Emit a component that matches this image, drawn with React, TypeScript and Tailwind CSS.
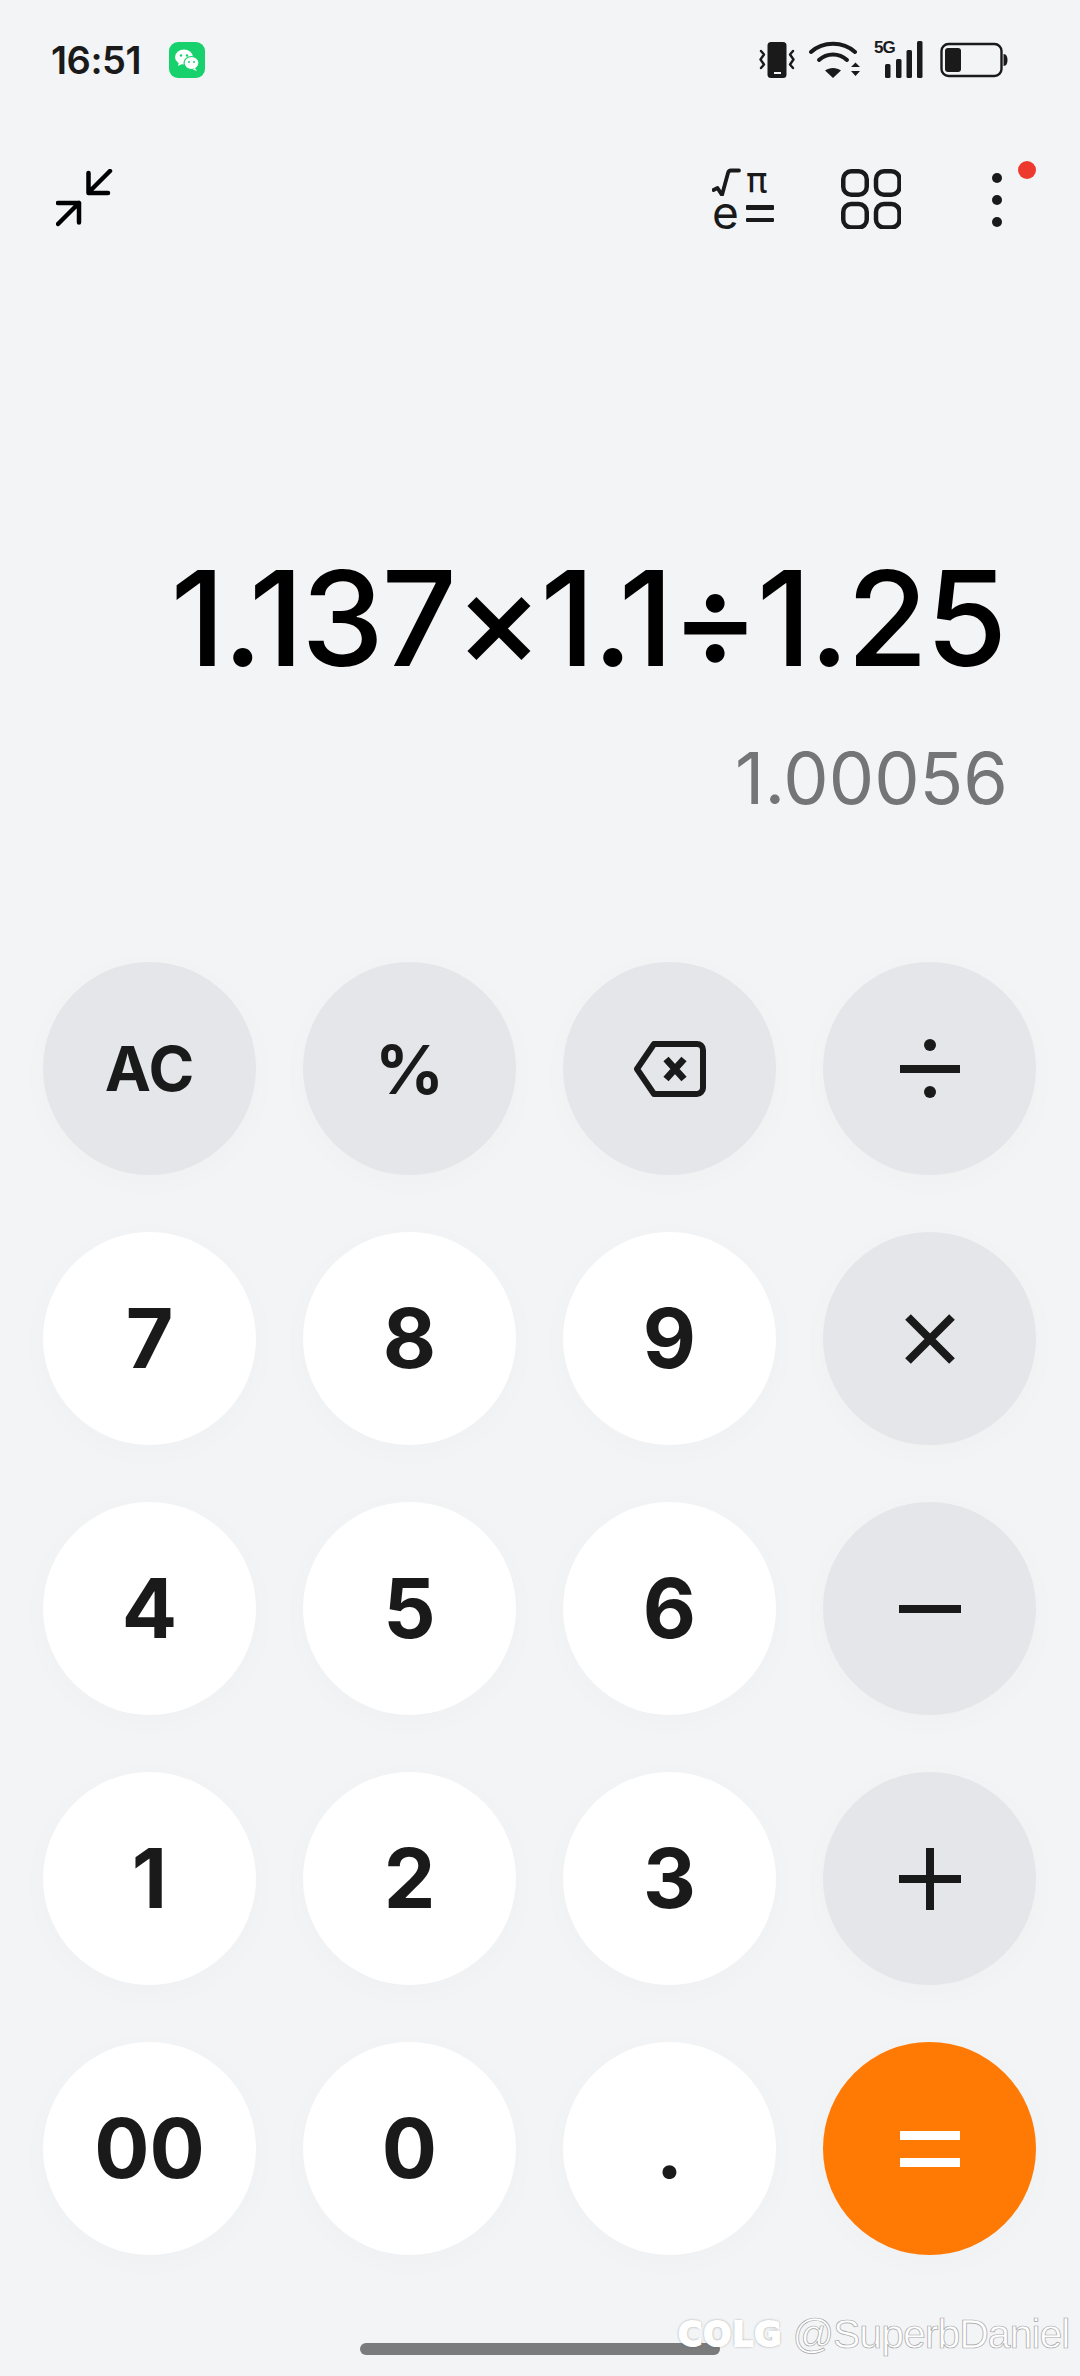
const ink = "#1a1a1b";

function WeChatIcon() {
  return (
    <div className="flex h-[36px] w-[36px] items-center justify-center rounded-[9px] bg-[#16d16c]">
      <svg width="28" height="28" viewBox="0 0 28 28">
        <ellipse cx="11" cy="11" rx="9" ry="7.5" fill="#fff" />
        <path d="M6 16l-1 4 5-2.5z" fill="#fff" />
        <ellipse cx="18.5" cy="17" rx="7.5" ry="6.5" fill="#fff" stroke="#16d16c" strokeWidth="1.2" />
        <path d="M22 22l2 3-4-1.5z" fill="#fff" />
        <circle cx="8" cy="9.5" r="1.2" fill="#16d16c" />
        <circle cx="14" cy="9.5" r="1.2" fill="#16d16c" />
        <circle cx="16" cy="16" r="1" fill="#16d16c" />
        <circle cx="21" cy="16" r="1" fill="#16d16c" />
      </svg>
    </div>
  );
}

function VibrateIcon() {
  return (
    <svg width="38" height="36" viewBox="0 0 38 36">
      <rect x="9.500" y="0" width="19" height="36" rx="3.5" fill={ink} />
      <rect x="16" y="30" width="7" height="2" fill="#f3f4f6" />
      <path d="M3 9l3 3.500-3.500 5 3.500 5-3 3.500M35 9l-3 3.500 3.500 5-3.500 5 3 3.500" fill="none" stroke={ink} strokeWidth="2.400" strokeLinecap="round" strokeLinejoin="round" />
    </svg>
  );
}

function WifiIcon() {
  return (
    <svg width="52" height="38" viewBox="0 0 52 38">
      <path d="M2 11C14 0 34 0 46 11" fill="none" stroke={ink} strokeWidth="4" strokeLinecap="round" />
      <path d="M10 19c8-7.500 20-7.500 28 0" fill="none" stroke={ink} strokeWidth="4" strokeLinecap="round" />
      <path d="M16 29.500c4.500-3.500 11.500-3.500 16 0l-8 7.500z" fill={ink} />
      <path d="M42 26l4.500-4.500 4.500 4.500zM42 30l4.500 5 4.500-5z" fill={ink} />
    </svg>
  );
}

function SignalIcon() {
  return (
    <div className="relative h-[38px] w-[50px]">
      <span className="absolute left-0 top-[-3px] text-[17px] font-bold leading-[20px] tracking-[-1px] text-[#1a1a1b] [font-family:'Liberation_Sans',sans-serif]">
        5G
      </span>
      <svg width="50" height="38" viewBox="0 0 50 38" className="absolute left-0 top-0">
        <rect x="11" y="23" width="5.500" height="14" rx="1.500" fill={ink} />
        <rect x="22" y="18" width="5.500" height="19" rx="1.500" fill={ink} />
        <rect x="32.500" y="9" width="5.500" height="28" rx="1.500" fill={ink} />
        <rect x="43" y="0" width="5.500" height="37" rx="1.500" fill={ink} />
      </svg>
    </div>
  );
}

function BatteryIcon() {
  return (
    <svg width="68" height="36" viewBox="0 0 68 36">
      <rect x="1.500" y="2" width="60" height="32" rx="7" fill="none" stroke={ink} strokeWidth="2.400" />
      <rect x="5" y="6" width="16" height="24" rx="3" fill={ink} />
      <path d="M63.500 12c3 0 4 3 4 6s-1 6-4 6z" fill={ink} />
    </svg>
  );
}

function CollapseIcon() {
  return (
    <svg width="64" height="60" viewBox="0 0 64 60" fill="none" stroke="#000" strokeWidth="4.500" strokeLinecap="round" strokeLinejoin="round">
      <path d="M54 2L33 23M32.500 4v20h19.500" />
      <path d="M2 55l21-21M2 34h21v19.500" />
    </svg>
  );
}

function ScientificIcon() {
  return (
    <div className="grid h-[64px] w-[66px] grid-cols-[34px_32px] grid-rows-[30px_34px] leading-none text-[#1a1a1b]">
      <svg width="30" height="28" viewBox="0 0 30 28" className="mt-[1px]">
        <path d="M1.500 22l4-2 4.500 7 6-22c.5-2 1.500-2.500 3-2.500h8" fill="none" stroke={ink} strokeWidth="3.800" strokeLinecap="round" strokeLinejoin="round" />
      </svg>
      <span className="text-[36px] font-medium leading-[28px] [font-family:'DejaVu_Sans',sans-serif]">π</span>
      <span className="text-[46px] leading-[30px]">e</span>
      <div className="mt-[8px] flex h-[17px] flex-col justify-between">
        <div className="h-[4.500px] w-[28px] rounded-[1px] bg-[#1a1a1b]" />
        <div className="h-[4.500px] w-[28px] rounded-[1px] bg-[#1a1a1b]" />
      </div>
    </div>
  );
}

function GridIcon() {
  return (
    <svg width="60" height="60" viewBox="0 0 60 60" fill="none" stroke={ink} strokeWidth="4.500">
      <rect x="2.250" y="2.250" width="23.500" height="23.500" rx="8" />
      <rect x="35" y="2.250" width="23.500" height="23.500" rx="8" />
      <rect x="2.250" y="35" width="23.500" height="23.500" rx="8" />
      <rect x="35" y="35" width="23.500" height="23.500" rx="8" />
    </svg>
  );
}

function MoreIcon() {
  return (
    <div className="relative flex h-[54px] w-[10px] flex-col justify-between">
      <div className="h-[10px] w-[10px] rounded-full bg-[#1a1a1b]" />
      <div className="h-[10px] w-[10px] rounded-full bg-[#1a1a1b]" />
      <div className="h-[10px] w-[10px] rounded-full bg-[#1a1a1b]" />
      <div className="absolute left-[26px] top-[-12px] h-[18px] w-[18px] rounded-full bg-[#ee3a2e]" />
    </div>
  );
}

function BackspaceIcon() {
  return (
    <svg width="72" height="56" viewBox="0 0 72 56" fill="none" stroke={ink} strokeLinecap="round" strokeLinejoin="round">
      <path d="M20 3h43c3 0 6 2 6 6v38c0 3-3 6-6 6H20L3 28z" strokeWidth="6" />
      <path d="M32 18l18 20M50 18L32 38" strokeWidth="7" strokeLinecap="butt" />
    </svg>
  );
}

function DivideIcon() {
  return (
    <svg width="60" height="60" viewBox="0 0 60 60" fill={ink}>
      <rect x="0" y="26" width="60" height="8" />
      <circle cx="30" cy="6" r="6" />
      <circle cx="30" cy="53" r="6" />
    </svg>
  );
}

function TimesIcon() {
  return (
    <svg width="50" height="50" viewBox="0 0 50 50" stroke={ink} strokeWidth="8" fill="none">
      <path d="M3 3l44 44M47 3L3 47" />
    </svg>
  );
}

function MinusIcon() {
  return (
    <svg width="62" height="8" viewBox="0 0 62 8" fill={ink}>
      <rect width="62" height="8" />
    </svg>
  );
}

function PlusIcon() {
  return (
    <svg width="62" height="62" viewBox="0 0 62 62" fill={ink}>
      <rect y="27" width="62" height="8" />
      <rect x="27" width="8" height="62" />
    </svg>
  );
}

function EqualsIcon() {
  return (
    <svg width="60" height="36" viewBox="0 0 60 36" fill="#fff">
      <rect width="60" height="9" />
      <rect y="27" width="60" height="9" />
    </svg>
  );
}

type Tone = "fn" | "num" | "accent";

function Key({ tone, size = "text-[82px]", children }: { tone: Tone; size?: string; children: React.ReactNode }) {
  const bg = tone === "fn" ? "bg-[#e5e6e9]" : tone === "num" ? "bg-white" : "bg-[#ff7a05]";
  return (
    <button
      className={`flex h-[213px] w-[213px] items-center justify-center rounded-full font-[650] leading-none text-[#1a1a1b] shadow-[0_6px_24px_rgba(120,125,135,0.03)] ${bg} ${size}`}
    >
      {children}
    </button>
  );
}

export default function App() {
  return (
    <div className="relative flex h-[2376px] w-[1080px] flex-col overflow-hidden bg-[#f3f4f6] [font-family:Inter,'Liberation_Sans',sans-serif]">
      <div className="mt-[42px] flex h-[36px] items-center justify-between pl-[51px] pr-[72px]">
        <div className="flex items-center gap-[28px]">
          <span className="text-[38px] font-semibold leading-none tracking-[-0.5px] text-[#1a1a1b]">16:51</span>
          <WeChatIcon />
        </div>
        <div className="flex items-center gap-[13px]">
          <VibrateIcon />
          <WifiIcon />
          <SignalIcon />
          <div className="ml-[3px]">
            <BatteryIcon />
          </div>
        </div>
      </div>

      <div className="mt-[90px] flex h-[62px] items-center justify-between pl-[56px] pr-[78px]">
        <CollapseIcon />
        <div className="flex items-center">
          <ScientificIcon />
          <div className="ml-[63px]">
            <GridIcon />
          </div>
          <div className="ml-[91px] mt-[2px]">
            <MoreIcon />
          </div>
        </div>
      </div>

      <div className="mt-[322px] flex flex-col items-end pr-[75px]">
        <div className="text-[132px] font-medium leading-[132px] tracking-[-2.4px] text-black">1.137×1.1÷1.25</div>
        <div className="mr-[-3px] mt-[57px] text-[72px] font-normal leading-[73px] text-[#747577]">1.00056</div>
      </div>

      <div className="mt-[148px] grid grid-cols-[repeat(4,213px)] gap-x-[47px] gap-y-[57px] pl-[43px]">
        <Key tone="fn" size="text-[62px]">AC</Key>
        <Key tone="fn" size="text-[68px]">%</Key>
        <Key tone="fn"><BackspaceIcon /></Key>
        <Key tone="fn"><DivideIcon /></Key>
        <Key tone="num">7</Key>
        <Key tone="num">8</Key>
        <Key tone="num">9</Key>
        <Key tone="fn"><TimesIcon /></Key>
        <Key tone="num">4</Key>
        <Key tone="num">5</Key>
        <Key tone="num">6</Key>
        <Key tone="fn"><MinusIcon /></Key>
        <Key tone="num">1</Key>
        <Key tone="num">2</Key>
        <Key tone="num">3</Key>
        <Key tone="fn"><PlusIcon /></Key>
        <Key tone="num">00</Key>
        <Key tone="num">0</Key>
        <Key tone="num">.</Key>
        <Key tone="accent"><EqualsIcon /></Key>
      </div>

      <div className="ml-[360px] mt-[88px] h-[12px] w-[360px] rounded-full bg-[#7a7b7d]" />

      <div className="absolute left-[678px] top-[2314px] flex items-center gap-[10px] text-white">
        <span className="text-[33px] font-black leading-none tracking-[1px] [-webkit-text-stroke:2px_#fff] [font-family:'DejaVu_Sans',sans-serif] [text-shadow:0_0_3px_#444]">COLG</span>
        <span className="text-[41px] font-light leading-none tracking-[-1px] [-webkit-text-stroke:0.7px_#a6a6a6] [font-family:'Liberation_Sans',sans-serif]">@SuperbDaniel</span>
      </div>
    </div>
  );
}
